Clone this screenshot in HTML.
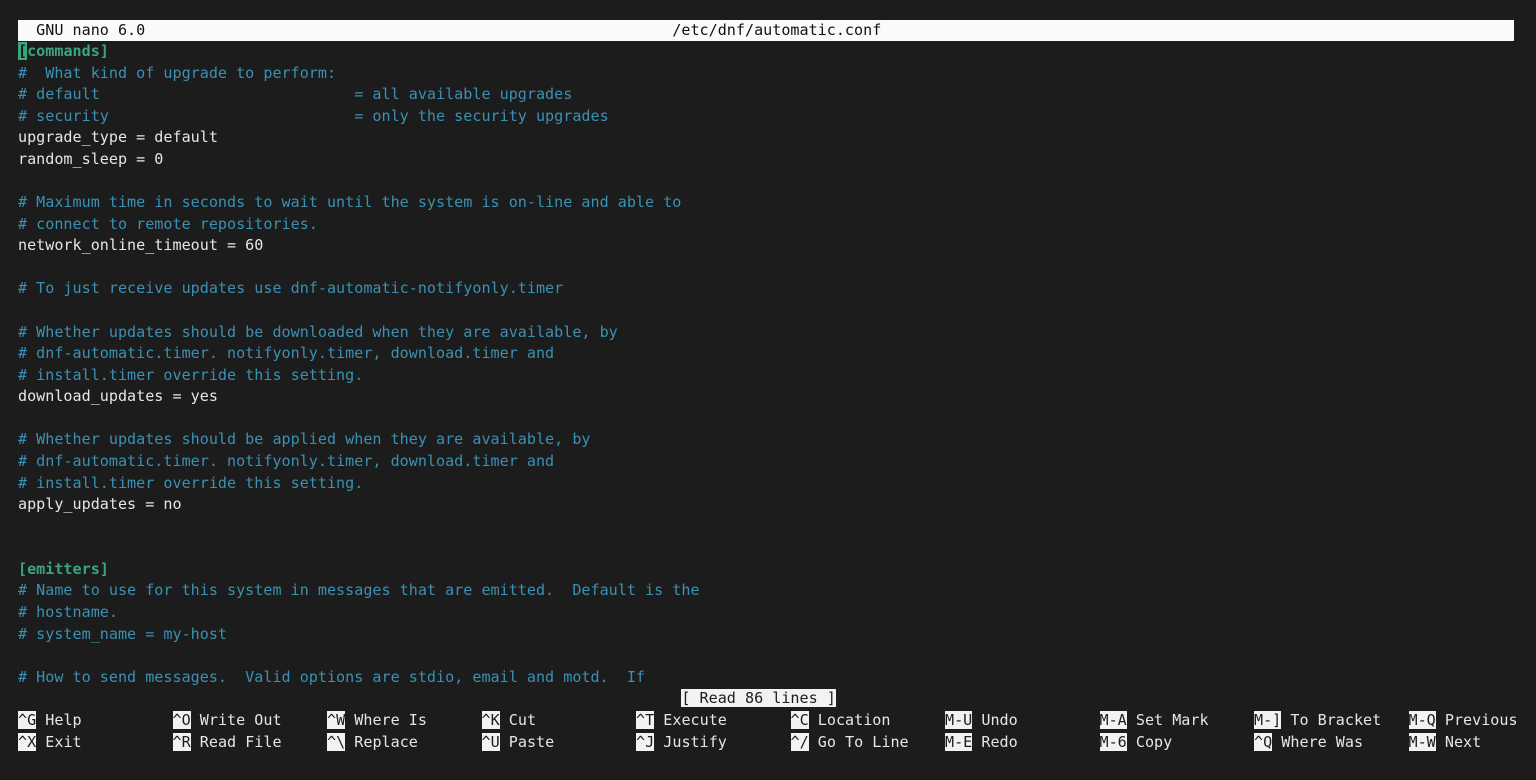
<!DOCTYPE html>
<html><head><meta charset="utf-8"><style>
html,body{margin:0;padding:0;background:#1c1c1c;width:1536px;height:780px;overflow:hidden}
pre{position:absolute;left:18px;margin:0;font-family:"DejaVu Sans Mono","Liberation Mono",monospace;font-size:15.1px;line-height:21.58px;color:#e6e6e6;white-space:pre}
.c{color:#3a91b4}
.g{color:#3ba57c;font-weight:bold}
.cur{background:#3ba57c;color:#1c1c1c}
.k{background:#f2f2f2;color:#1c1c1c}
#title{position:absolute;left:18px;top:20px;width:1496px;height:21px;background:#fafafa}
#title pre{left:0;top:0;color:#111;line-height:21px}
</style></head><body>
<div id="title"><pre>  GNU nano 6.0                                                          /etc/dnf/automatic.conf</pre></div>
<pre style="top:41px"><span class="g"><span class="cur">[</span>commands]</span>
<span class="c">#  What kind of upgrade to perform:</span>
<span class="c"># default                            = all available upgrades</span>
<span class="c"># security                           = only the security upgrades</span>
upgrade_type = default
random_sleep = 0

<span class="c"># Maximum time in seconds to wait until the system is on-line and able to</span>
<span class="c"># connect to remote repositories.</span>
network_online_timeout = 60

<span class="c"># To just receive updates use dnf-automatic-notifyonly.timer</span>

<span class="c"># Whether updates should be downloaded when they are available, by</span>
<span class="c"># dnf-automatic.timer. notifyonly.timer, download.timer and</span>
<span class="c"># install.timer override this setting.</span>
download_updates = yes

<span class="c"># Whether updates should be applied when they are available, by</span>
<span class="c"># dnf-automatic.timer. notifyonly.timer, download.timer and</span>
<span class="c"># install.timer override this setting.</span>
apply_updates = no


<span class="g">[emitters]</span>
<span class="c"># Name to use for this system in messages that are emitted.  Default is the</span>
<span class="c"># hostname.</span>
<span class="c"># system_name = my-host</span>

<span class="c"># How to send messages.  Valid options are stdio, email and motd.  If</span>
                                                                         <span class="k">[ Read 86 lines ]</span>
<span class="k">^G</span> Help          <span class="k">^O</span> Write Out     <span class="k">^W</span> Where Is      <span class="k">^K</span> Cut           <span class="k">^T</span> Execute       <span class="k">^C</span> Location      <span class="k">M-U</span> Undo         <span class="k">M-A</span> Set Mark     <span class="k">M-]</span> To Bracket   <span class="k">M-Q</span> Previous
<span class="k">^X</span> Exit          <span class="k">^R</span> Read File     <span class="k">^\</span> Replace       <span class="k">^U</span> Paste         <span class="k">^J</span> Justify       <span class="k">^/</span> Go To Line    <span class="k">M-E</span> Redo         <span class="k">M-6</span> Copy         <span class="k">^Q</span> Where Was     <span class="k">M-W</span> Next</pre>
</body></html>
